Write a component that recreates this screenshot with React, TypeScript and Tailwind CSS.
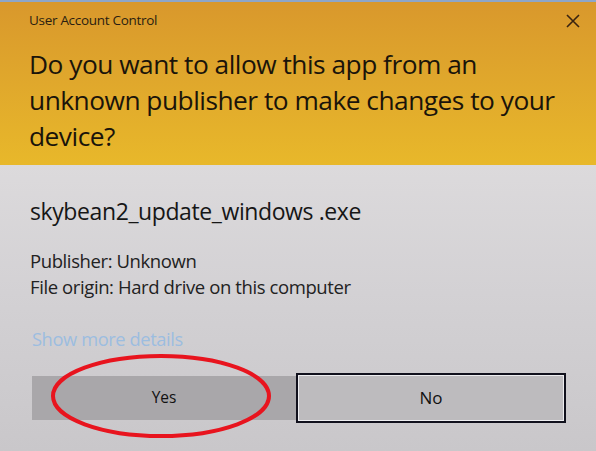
export default function App() {
  return (
    <div className="relative w-[596px] h-[451px] overflow-hidden font-['Open_Sans',sans-serif] text-[#161616]">
      {/* Yellow header band */}
      <div className="h-[165px] border-t-2 border-[#8ea6c8] bg-gradient-to-b from-[#d9982c] via-[#e0a82c] to-[#e8b82a] px-[29px] pt-[8px]">
        <div className="flex items-center justify-between">
          <span className="text-[13.5px] tracking-[-0.3px] text-[#2a1e10]">User Account Control</span>
          <svg width="14" height="14" viewBox="0 0 14 14" className="mr-[-13px] mt-[2px]">
            <path d="M1 1L13 13M13 1L1 13" stroke="#3a2410" strokeWidth="1.6" />
          </svg>
        </div>
        <p className="mt-[16px] text-[26.3px] leading-[36px] tracking-[-0.5px] text-[#1a140a]">
          Do you want to allow this app from an unknown publisher to make changes to your device?
        </p>
      </div>

      {/* Grey body */}
      <div className="h-[286px] bg-gradient-to-b from-[#dcdadc] via-[#d2d0d3] to-[#c9c7ca] px-[30px] pt-[29px]">
        <div className="text-[23px] tracking-[-0.4px] leading-[34px]">skybean2_update_windows .exe</div>
        <div className="mt-[20px] text-[18.5px] leading-[26px] tracking-[-0.4px] text-[#222]">
          <div>Publisher: Unknown</div>
          <div>File origin: Hard drive on this computer</div>
        </div>
        <div className="mt-[26px] ml-[2px] text-[18.3px] leading-[26px] tracking-[-0.4px] text-[#9cbde0]">Show more details</div>
        <div className="mt-[21px] ml-[2px] flex items-center">
          <div className="flex h-[44px] w-[267px] items-center justify-center bg-[#a9a7aa] text-[15.5px] text-[#111]">
            Yes
          </div>
          <div className="flex h-[50px] w-[273px] items-center justify-center border-2 border-[#10101c] bg-[#bdbbbe] text-[17px] text-[#111] shadow-[inset_0_0_0_1px_#ededf0]">
            No
          </div>
        </div>
      </div>

      {/* Red marker ellipse drawn over the Yes button */}
      <svg className="absolute left-0 top-0" width="596" height="451" viewBox="0 0 596 451">
        <ellipse cx="161" cy="396" rx="108" ry="40" fill="none" stroke="#e8141e" strokeWidth="4" />
      </svg>
    </div>
  );
}
